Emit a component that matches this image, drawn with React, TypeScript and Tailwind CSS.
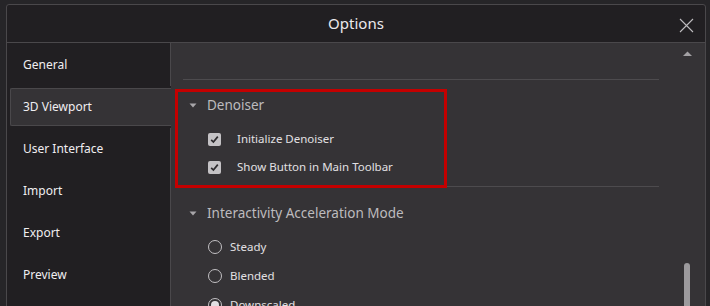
import { useState } from 'react';

const SECTIONS = ['General', '3D Viewport', 'User Interface', 'Import', 'Export', 'Preview'];
const MODES = ['Steady', 'Blended', 'Downscaled'];

function Caret() {
  return (
    <svg width="8" height="5" viewBox="0 0 8 5" className="shrink-0">
      <path d="M0.5 0.5 H7.5 L4 4.5 Z" fill="#a8a6a9" />
    </svg>
  );
}

function Checkbox({ checked }: { checked: boolean }) {
  return (
    <span className="w-[13px] h-[13px] rounded-[2px] bg-[#c4c2c5] flex items-center justify-center shrink-0">
      {checked && (
        <svg width="11" height="11" viewBox="0 0 11 11">
          <path d="M2.2 5.8 L4.4 8 L8.8 2.6" fill="none" stroke="#2c2a2d" strokeWidth="1.7" />
        </svg>
      )}
    </span>
  );
}

function Radio({ checked }: { checked: boolean }) {
  return (
    <span className="w-[14px] h-[14px] rounded-full border border-[#c2c0c3] flex items-center justify-center shrink-0">
      {checked && <span className="w-[8px] h-[8px] rounded-full bg-[#e2e0e3]" />}
    </span>
  );
}

export default function App() {
  const [active, setActive] = useState('3D Viewport');
  const [mode, setMode] = useState('Downscaled');

  return (
    <div
      className="relative w-[710px] h-[306px] overflow-hidden bg-[#262528] pt-[4px] pl-[6px] pr-[4px]"
      style={{ fontFamily: '"Noto Sans", "Open Sans", sans-serif' }}
    >
      <div className="h-[330px] flex flex-col border border-[#4a484b] rounded-t-[3px] bg-[#211f22]">
        {/* title bar */}
        <div className="relative h-[38px] shrink-0 flex items-center justify-center border-b border-[#4a484b]">
          <span className="text-[15px] text-[#ebe9ec]">Options</span>
          <button className="absolute right-[11px] top-[12px] w-[16px] h-[16px] flex items-center justify-center">
            <svg width="15" height="15" viewBox="0 0 15 15">
              <path d="M1 1 L14 14 M14 1 L1 14" stroke="#bebcbf" strokeWidth="1.1" />
            </svg>
          </button>
        </div>

        <div className="flex flex-1 min-h-0">
          {/* sidebar */}
          <div className="w-[164px] shrink-0 flex flex-col">
            <div className="h-px shrink-0 border-r border-[#4a484b]" />
            {SECTIONS.map(s => {
              const selected = s === active;
              return (
                <div key={s} className={selected ? 'h-[42px] py-[2px] pl-[3px]' : 'h-[42px] border-r border-[#4a484b]'}>
                  <button
                    onClick={() => setActive(s)}
                    className={
                      selected
                        ? 'w-full h-full flex items-center pl-[12px] text-[12px] text-[#f0eef1] bg-[#353336] border-t border-l border-b border-[#4a484b] rounded-l-[2px]'
                        : 'w-full h-full flex items-center pl-[16px] text-[12px] text-[#f0eef1]'
                    }
                  >
                    {s}
                  </button>
                </div>
              );
            })}
            <div className="flex-1 border-r border-[#4a484b]" />
          </div>

          {/* content */}
          <div className="flex-1 flex bg-[#353336] min-w-0">
            <div className="flex-1 pl-[12px] flex flex-col">
              <div className="h-[36px] shrink-0" />
              <div className="h-px bg-[#4d4b4e] shrink-0" />

              <div className="mt-[8px] h-[34px] flex items-center gap-[10px] pl-[6px] shrink-0">
                <Caret />
                <span className="text-[13.5px] text-[#bdbbbe]">Denoiser</span>
              </div>
              <div className="mt-[3px] shrink-0">
                {['Initialize Denoiser', 'Show Button in Main Toolbar'].map(label => (
                  <div key={label} className="h-[28px] flex items-center pl-[25px] gap-[16px]">
                    <Checkbox checked />
                    <span className="text-[11.5px] text-[#e2e0e3]">{label}</span>
                  </div>
                ))}
              </div>
              <div className="h-[5px] shrink-0" />
              <div className="h-px bg-[#4d4b4e] shrink-0" />

              <div className="mt-[9px] h-[34px] flex items-center gap-[10px] pl-[6px] shrink-0">
                <Caret />
                <span className="text-[13.5px] text-[#bdbbbe]">Interactivity Acceleration Mode</span>
              </div>
              <div className="mt-[2px]">
                {MODES.map(m => (
                  <button
                    key={m}
                    onClick={() => setMode(m)}
                    className="h-[29px] flex items-center pl-[25px] gap-[8px]"
                  >
                    <Radio checked={mode === m} />
                    <span className="text-[11.5px] text-[#e2e0e3]">{m}</span>
                  </button>
                ))}
              </div>
            </div>

            {/* scrollbar */}
            <div className="w-[46px] shrink-0 relative">
              <svg width="9" height="5" viewBox="0 0 9 5" className="absolute left-[24px] top-[8px]">
                <path d="M0 5 L4.5 0.5 L9 5 Z" fill="#a3a1a4" />
              </svg>
              <div className="absolute left-[25px] top-[220px] w-[6px] h-[80px] rounded-t-[3px] bg-[#9c9a9d]" />
            </div>
          </div>
        </div>
      </div>

      {/* annotation box */}
      <div className="absolute left-[175px] top-[89px] w-[272px] h-[99px] border-[3px] border-[#c40000] pointer-events-none" />
    </div>
  );
}
